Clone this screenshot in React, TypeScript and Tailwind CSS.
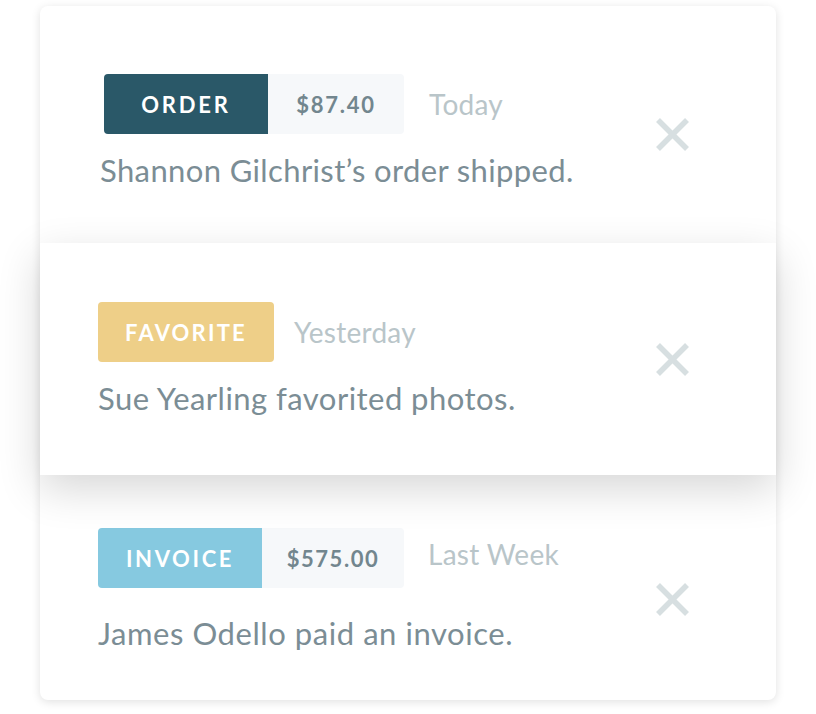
import React from "react"

const font = { fontFamily: "Lato, 'Open Sans', sans-serif" }

function CloseIcon() {
  return (
    <svg width="35" height="33" viewBox="0 0 35 33" className="block">
      <line x1="3" y1="2" x2="32" y2="31" stroke="#d7dfe1" strokeWidth="5.5" />
      <line x1="32" y1="2" x2="3" y2="31" stroke="#d7dfe1" strokeWidth="5.5" />
    </svg>
  )
}

export default function App() {
  return (
    <div className="w-full h-[714px] bg-white overflow-hidden" style={font}>
      <div className="ml-[40px] mt-[6px] w-[736px] h-[694px] bg-white rounded-lg shadow-[0_2px_10px_rgba(0,0,0,0.12)] flex flex-col">
        {/* Order */}
        <div className="h-[237px] flex items-start justify-between pl-[64px] pr-[86px] pt-[68px]">
          <div>
            <div className="flex items-center">
              <div className="w-[164px] h-[60px] rounded-l-[4px] bg-[#2a5868] flex items-center justify-center text-white font-bold text-[22px] tracking-[0.13em]">
                ORDER
              </div>
              <div className="w-[136px] h-[60px] rounded-r-[4px] bg-[#f6f8fa] flex items-center justify-center text-[#72868e] font-bold text-[22px] tracking-[0.08em]">
                $87.40
              </div>
              <div className="ml-[25px] text-[28px] tracking-[0.01em] text-[#b9c5c9]">Today</div>
            </div>
            <p className="-ml-[4px] mt-[18px] text-[31px] leading-[36px] tracking-[0.012em] text-[#7b8d95]">
              Shannon Gilchrist’s order shipped.
            </p>
          </div>
          <div className="mt-[44px]">
            <CloseIcon />
          </div>
        </div>

        {/* Favorite */}
        <div className="relative z-10 h-[232px] bg-white shadow-[0_14px_40px_rgba(0,0,0,0.16)] flex items-start justify-between pl-[58px] pr-[86px] pt-[59px]">
          <div>
            <div className="flex items-center">
              <div className="w-[176px] h-[60px] rounded-[4px] bg-[#eecf88] flex items-center justify-center text-white font-bold text-[22px] tracking-[0.1em]">
                FAVORITE
              </div>
              <div className="ml-[20px] text-[28px] tracking-[0.01em] text-[#b9c5c9]">Yesterday</div>
            </div>
            <p className="mt-[18px] text-[31px] leading-[36px] tracking-[0.015em] text-[#7b8d95]">
              Sue Yearling favorited photos.
            </p>
          </div>
          <div className="mt-[41px]">
            <CloseIcon />
          </div>
        </div>

        {/* Invoice */}
        <div className="h-[225px] flex items-start justify-between pl-[58px] pr-[86px] pt-[53px]">
          <div>
            <div className="flex items-center">
              <div className="w-[164px] h-[60px] rounded-l-[4px] bg-[#86c9e0] flex items-center justify-center text-white font-bold text-[22px] tracking-[0.12em]">
                INVOICE
              </div>
              <div className="w-[142px] h-[60px] rounded-r-[4px] bg-[#f6f8fa] flex items-center justify-center text-[#72868e] font-bold text-[22px] tracking-[0.07em]">
                $575.00
              </div>
              <div className="ml-[24px] -mt-[8px] text-[28px] tracking-[0.01em] text-[#b9c5c9]">Last Week</div>
            </div>
            <p className="mt-[27px] text-[31px] leading-[36px] tracking-[0.018em] text-[#7b8d95]">
              James Odello paid an invoice.
            </p>
          </div>
          <div className="mt-[55px]">
            <CloseIcon />
          </div>
        </div>
      </div>
    </div>
  )
}
